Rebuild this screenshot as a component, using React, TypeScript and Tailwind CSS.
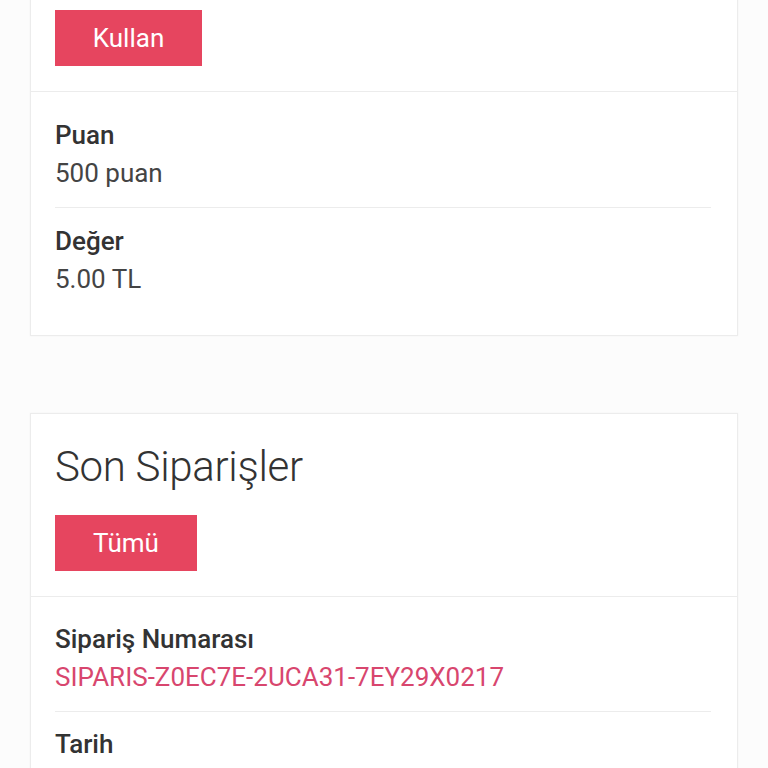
const font = { fontFamily: "Roboto, 'Noto Sans', sans-serif" };

function Field({ label, value, pink }: { label: string; value?: string; pink?: boolean }) {
  return (
    <div>
      <div className="text-[26px] leading-[38px] font-medium text-[#333333]">{label}</div>
      {value && (
        <div className={`text-[26px] leading-[38px] ${pink ? "text-[#d8466e]" : "text-[#444444]"}`}>{value}</div>
      )}
    </div>
  );
}

export default function App() {
  return (
    <div className="h-[768px] bg-[#fcfcfc] overflow-hidden" style={font}>
      <div className="-mt-[2px] mx-[30px] bg-white border border-[#ececec] border-t-0 shadow-[0_0_2px_rgba(0,0,0,0.04)]">
        <div className="px-[24px] pt-[12px] pb-[25px] border-b border-[#ececec]">
          <button className="w-[147px] h-[56px] bg-[#e6455f] text-white text-[26px] font-normal">Kullan</button>
        </div>
        <div className="pl-[24px] pr-[26px] pt-[24px] pb-[37px]">
          <div className="pb-[15px] border-b border-[#ececec]">
            <Field label="Puan" value="500 puan" />
          </div>
          <div className="pt-[14px]">
            <Field label="Değer" value="5.00 TL" />
          </div>
        </div>
      </div>

      <div className="mt-[77px] mx-[30px] bg-white border border-[#ececec] shadow-[0_0_2px_rgba(0,0,0,0.04)]">
        <div className="px-[24px] pt-[27px] pb-[25px] border-b border-[#ececec]">
          <h2 className="text-[42px] leading-[52px] font-light text-[#333333] tracking-[-0.3px]">Son Siparişler</h2>
          <button className="mt-[22px] w-[142px] h-[56px] bg-[#e6455f] text-white text-[26px] font-normal">Tümü</button>
        </div>
        <div className="pl-[24px] pr-[26px] pt-[23px] pb-[40px]">
          <div className="pb-[15px] border-b border-[#ececec]">
            <Field label="Sipariş Numarası" value="SIPARIS-Z0EC7E-2UCA31-7EY29X0217" pink />
          </div>
          <div className="pt-[13px]">
            <Field label="Tarih" />
          </div>
        </div>
      </div>
    </div>
  );
}
